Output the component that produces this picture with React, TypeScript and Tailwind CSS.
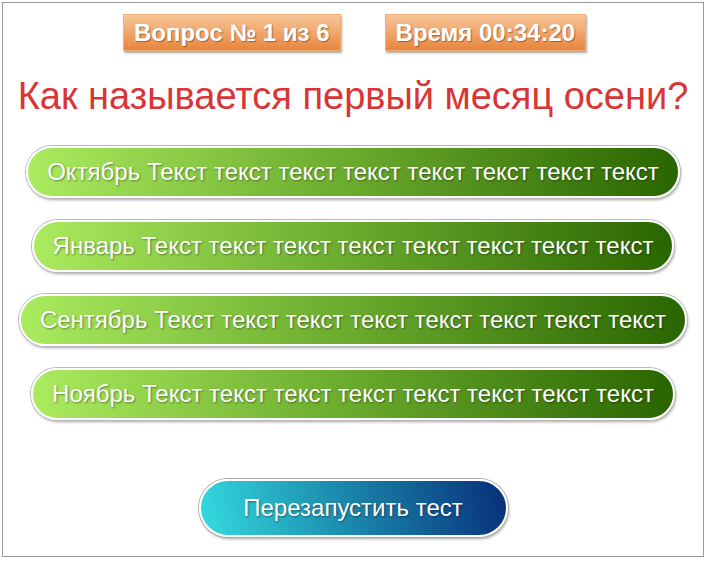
const answers = ['Октябрь', 'Январь', 'Сентябрь', 'Ноябрь'];
const filler = 'Текст текст текст текст текст текст текст текст';

function Badge({ children }: { children: React.ReactNode }) {
  return (
    <div className="h-[37px] px-[10px] flex items-center bg-gradient-to-b from-[#f6c697] to-[#e8853a] border border-[#f0b07a] shadow-[1px_2px_2px_rgba(0,0,0,0.35)] text-white font-bold text-[24px] [text-shadow:1px_1px_1px_rgba(0,0,0,0.35)]">
      {children}
    </div>
  );
}

export default function App() {
  return (
    <div className="w-[708px] h-[562px] bg-white p-[2px] font-['Liberation_Sans',Arial,sans-serif]">
      <div className="w-[702px] h-[555px] border border-[#999] flex flex-col items-center">
        {/* шапка */}
        <div className="flex gap-[44px] mt-[11px] ml-[3px]">
          <Badge>Вопрос № 1 из 6</Badge>
          <Badge>Время 00:34:20</Badge>
        </div>

        <h1 className="mt-[23px] text-[38px] leading-[44px] text-[#d93535]">
          Как называется первый месяц осени?
        </h1>

        {/* варианты ответа */}
        <div className="flex flex-col items-center gap-[22px] mt-[28px]">
          {answers.map(a => (
            <button
              key={a}
              className="h-[52px] px-[19px] rounded-full border-2 border-white bg-gradient-to-r from-[#abeb5e] via-[#6aaa2c] to-[#2a6600] shadow-[0_0_0_1px_#b8b8b8,1px_2px_3px_rgba(0,0,0,0.35)] text-white text-[24px] [text-shadow:1px_1px_2px_rgba(0,0,0,0.4)] whitespace-nowrap"
            >
              {a} {filler}
            </button>
          ))}
        </div>

        <button className="mt-[59px] h-[58px] w-[309px] rounded-full border-2 border-white bg-[linear-gradient(75deg,#34dce0,#1a84aa_50%,#072e78)] shadow-[0_0_0_1px_#aaa,1px_2px_3px_rgba(0,0,0,0.35)] text-white text-[24px] [text-shadow:1px_1px_2px_rgba(0,0,0,0.4)]">
          Перезапустить тест
        </button>
      </div>
    </div>
  );
}
